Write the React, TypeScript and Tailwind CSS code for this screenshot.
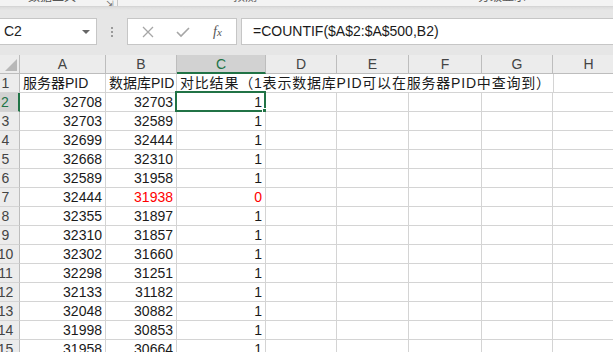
import React from 'react';

const colWidths = [86, 71, 89, 71, 72, 73, 71, 72];
const colNames = ['A', 'B', 'C', 'D', 'E', 'F', 'G', 'H'];

const colA = [32708, 32703, 32699, 32668, 32589, 32444, 32355, 32310, 32302, 32298, 32133, 32048, 31998, 31958];
const colB = [32703, 32589, 32444, 32310, 31958, 31938, 31897, 31857, 31660, 31251, 31182, 30882, 30853, 30664];

const font = { fontFamily: '"Liberation Sans", "Noto Sans CJK SC", sans-serif' };

const RowHead: React.FC<{ n: number; selected?: boolean }> = ({ n, selected }) => (
  <div
    className={
      'w-[28px] h-[19px] shrink-0 border-b border-[#d4d4d4] text-[14px] leading-[18px] text-center ' +
      (selected
        ? 'bg-[#d2d2d2] border-r-2 border-r-[#217346] text-[#217346]'
        : 'bg-[#ececec] border-r border-r-[#bdbdbd] text-[#444]')
    }
  >
    {n}
  </div>
);

const Cell: React.FC<{ w: number; children?: React.ReactNode; red?: boolean; left?: boolean; selected?: boolean }> = ({
  w,
  children,
  red,
  left,
  selected,
}) => (
  <div
    className={
      'relative h-[19px] shrink-0 bg-white border-r border-b border-[#d4d4d4] text-[14px] leading-[18px] whitespace-nowrap px-[3px] ' +
      (left ? 'text-left ' : 'text-right ') +
      (red ? 'text-[#ff0000]' : 'text-[#1a1a1a]')
    }
    style={{ width: w }}
  >
    {children}
    {selected && (
      <div className="absolute -left-[2px] -top-[2px] -right-[1px] -bottom-[1px] border-2 border-[#217346] pointer-events-none">
        <div className="absolute -right-[4px] -bottom-[4px] w-[6px] h-[6px] bg-[#217346] border border-white" />
      </div>
    )}
  </div>
);

export default function App() {
  return (
    <div className="w-[613px] h-[352px] overflow-hidden bg-[#e6e6e6] flex flex-col" style={font}>
      {/* ribbon remnant */}
      <div className="h-[7px] shrink-0 bg-[#f3f3f3] border-b border-[#d5d5d5] overflow-hidden flex text-[12px] text-[#555]">
        <div className="w-[106px] pl-[28px] -mt-[10px] leading-[14px]">数据工具</div>
        <div className="w-[11px] -mt-[2px] text-[#666] text-[9px]">⇲</div>
        <div className="w-px h-[7px] bg-[#c8c8c8]" />
        <div className="w-[115px]" />
        <div className="w-[140px] -mt-[10px] leading-[14px]">预测</div>
        <div className="w-[105px]" />
        <div className="-mt-[10px] leading-[14px]">分级显示</div>
      </div>
      <div className="h-[3px] shrink-0 bg-gradient-to-b from-[#dcdcdc] to-[#e6e6e6]" />

      {/* formula bar */}
      <div className="mt-[8px] h-[27px] shrink-0 flex">
        <div className="-ml-[1px] w-[98px] bg-white border border-[#c6c6c6] flex items-center justify-between pl-[4px] pr-[6px]">
          <span className="text-[14px] text-[#222]">C2</span>
          <span className="w-0 h-0 border-l-[4px] border-r-[4px] border-t-[4px] border-l-transparent border-r-transparent border-t-[#666]" />
        </div>
        <div className="w-[30px] flex flex-col items-center justify-center gap-[2px]">
          <span className="w-[2px] h-[2px] bg-[#9a9a9a]" />
          <span className="w-[2px] h-[2px] bg-[#9a9a9a]" />
          <span className="w-[2px] h-[2px] bg-[#9a9a9a]" />
        </div>
        <div className="w-[110px] bg-white border border-[#c6c6c6] flex items-center">
          <svg width="12" height="12" viewBox="0 0 12 12" className="ml-[14px]">
            <path d="M1 1 L11 11 M11 1 L1 11" stroke="#a6a6a6" strokeWidth="1.3" fill="none" />
          </svg>
          <svg width="14" height="12" viewBox="0 0 14 12" className="ml-[22px]">
            <path d="M1 6 L5 10 L13 2" stroke="#a6a6a6" strokeWidth="1.6" fill="none" />
          </svg>
          <span
            className="ml-[23px] text-[14px] italic text-[#555]"
            style={{ fontFamily: '"Liberation Serif", serif' }}
          >
            f<span className="text-[11px]">x</span>
          </span>
        </div>
        <div className="ml-[4px] flex-1 -mr-[2px] bg-white border border-[#c6c6c6] flex items-center pl-[11px]">
          <span className="text-[14px] text-[#1a1a1a]">=COUNTIF($A$2:$A$500,B2)</span>
        </div>
      </div>

      {/* grid */}
      <div className="mt-[10px] -ml-[8px] flex flex-col">
        <div className="flex h-[19px]">
          <div className="w-[28px] shrink-0 bg-[#ececec] border-r border-b border-[#bdbdbd] relative">
            <svg width="12" height="12" viewBox="0 0 12 12" className="absolute right-[2px] bottom-[2px]">
              <path d="M12 0 L12 12 L0 12 Z" fill="#b8b8b8" />
            </svg>
          </div>
          {colNames.map((c, i) =>
            c === 'C' ? (
              <div
                key={c}
                className="shrink-0 bg-[#d2d2d2] border-r border-[#bdbdbd] border-b-2 border-b-[#217346] text-center text-[14px] leading-[18px] text-[#217346]"
                style={{ width: colWidths[i] }}
              >
                {c}
              </div>
            ) : (
              <div
                key={c}
                className="shrink-0 bg-[#ececec] border-r border-b border-[#bdbdbd] text-center text-[14px] leading-[18px] text-[#444]"
                style={{ width: colWidths[i] }}
              >
                {c}
              </div>
            )
          )}
        </div>

        <div className="flex">
          <RowHead n={1} />
          <Cell w={colWidths[0]} left>服务器PID</Cell>
          <Cell w={colWidths[1]} left>数据库PID</Cell>
          <div className="relative h-[19px] shrink-0 bg-white border-b border-[#d4d4d4]" style={{ width: colWidths[2] + colWidths[3] + colWidths[4] + colWidths[5] + colWidths[6] }}>
            <div className="absolute left-[3px] top-0 text-[14px] leading-[18px] whitespace-nowrap text-[#1a1a1a] tracking-[0.8px]">
              对比结果（1表示数据库PID可以在服务器PID中查询到）
            </div>
          </div>
          <div className="h-[19px] shrink-0 bg-white border-l border-b border-[#d4d4d4]" style={{ width: colWidths[7] }} />
        </div>

        {colA.map((a, i) => {
          const b = colB[i];
          const red = i === 5;
          return (
            <div key={i} className="flex">
              <RowHead n={i + 2} selected={i === 0} />
              <Cell w={colWidths[0]}>{a}</Cell>
              <Cell w={colWidths[1]} red={red}>{b}</Cell>
              <Cell w={colWidths[2]} red={red} selected={i === 0}>{red ? 0 : 1}</Cell>
              {colWidths.slice(3).map((w, j) => (
                <Cell key={j} w={w} />
              ))}
            </div>
          );
        })}
      </div>
    </div>
  );
}
